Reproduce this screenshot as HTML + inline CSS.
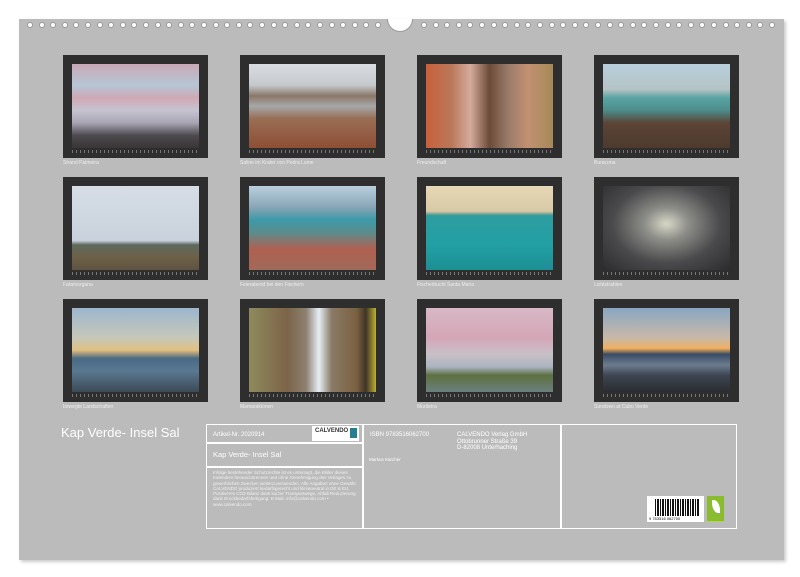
<!DOCTYPE html>
<html><head><meta charset="utf-8"><style>
*{margin:0;padding:0;box-sizing:border-box}
body{width:800px;height:577px;background:#fff;position:relative;overflow:hidden;font-family:"Liberation Sans",sans-serif}
#panel{position:absolute;left:19px;top:19px;width:765px;height:541px;background:#bbbbbb;box-shadow:2px 2px 3px #ccc}
.hole{position:absolute;top:22px;width:6px;height:6px;border-radius:50%;background:#fff;border:1px solid #999}
#notch{position:absolute;left:387px;top:19px;width:26px;height:13px;border-radius:0 0 13px 13px;background:#fff;border:1px solid #999;border-top:none}
.fr{position:absolute;width:145px;height:103px;background:#2e2e2e}
.ph{position:absolute;left:9px;top:9px;width:127px;height:84px}
.bar{position:absolute;left:9px;top:95px;width:127px;height:3px;background:repeating-linear-gradient(90deg,#777 0 1px,#2e2e2e 1px 4px)}
.cap{position:absolute;font-size:5px;color:#eee}
.w{color:#fff}
.box{position:absolute;border:1.5px solid #fff}
</style></head><body>
<div id="panel"></div>
<div id="notch"></div>
<div id="holes"></div>

<div class="fr" style="left:63px;top:55px"><div class="ph" style="background:linear-gradient(180deg,#c9a9b7 0%,#b6c6d6 25%,#cfa8b4 40%,#c7c4d2 55%,#a9a4b4 70%,#4d4a4e 85%,#3a3536 100%)"></div><div class="bar"></div></div>
<div class="fr" style="left:240px;top:55px"><div class="ph" style="background:linear-gradient(180deg,#d9dde2 0%,#c6c9cc 25%,#8a7768 38%,#a6a8aa 50%,#9a6e54 65%,#8e4e36 100%)"></div><div class="bar"></div></div>
<div class="fr" style="left:417px;top:55px"><div class="ph" style="background:linear-gradient(90deg,#c8603a 0%,#b9785a 20%,#d6aa9c 35%,#6c4a38 50%,#9b7c6a 65%,#c29072 80%,#a68958 100%)"></div><div class="bar"></div></div>
<div class="fr" style="left:594px;top:55px"><div class="ph" style="background:linear-gradient(180deg,#b8cfde 0%,#b5c4c4 30%,#5aa5a5 40%,#4e8c8a 55%,#5c4436 70%,#4d3a2e 100%)"></div><div class="bar"></div></div>
<div class="cap" style="left:63px;top:160px">Strand Palmeira</div>
<div class="cap" style="left:240px;top:160px">Saline im Krater von Pedra Lume</div>
<div class="cap" style="left:417px;top:160px">Freundschaft</div>
<div class="cap" style="left:594px;top:160px">Buracona</div>

<div class="fr" style="left:63px;top:177px"><div class="ph" style="background:linear-gradient(180deg,#d6dde6 0%,#c9d2dc 65%,#5e6a5c 70%,#6e6048 85%,#5e5444 100%)"></div><div class="bar"></div></div>
<div class="fr" style="left:240px;top:177px"><div class="ph" style="background:linear-gradient(180deg,#b8d0e0 0%,#8aa6b6 25%,#3d9aa8 40%,#5c8c8c 55%,#b06050 75%,#a06a5a 100%)"></div><div class="bar"></div></div>
<div class="fr" style="left:417px;top:177px"><div class="ph" style="background:linear-gradient(180deg,#e8d8b6 0%,#d8caa6 30%,#2e9da0 35%,#22a0a4 70%,#1d8f94 100%)"></div><div class="bar"></div></div>
<div class="fr" style="left:594px;top:177px"><div class="ph" style="background:radial-gradient(ellipse at 50% 45%,#d8d8c8 0%,#8c8c88 25%,#4a4a4c 60%,#2c2c2e 100%)"></div><div class="bar"></div></div>
<div class="cap" style="left:63px;top:282px">Fatamorgana</div>
<div class="cap" style="left:240px;top:282px">Feierabend bei den Fischern</div>
<div class="cap" style="left:417px;top:282px">Fischerbucht Santa Maria</div>
<div class="cap" style="left:594px;top:282px">Lichtstrahlen</div>

<div class="fr" style="left:63px;top:299px"><div class="ph" style="background:linear-gradient(180deg,#9cb6ce 0%,#c6c8b8 35%,#e2c082 50%,#486a86 60%,#5a7890 75%,#3c4a56 100%)"></div><div class="bar"></div></div>
<div class="fr" style="left:240px;top:299px"><div class="ph" style="background:linear-gradient(90deg,#8e8a5c 0%,#7c6448 30%,#8e8070 45%,#e6eef6 55%,#8a7a66 65%,#7a6040 85%,#3e3428 92%,#bcb030 100%)"></div><div class="bar"></div></div>
<div class="fr" style="left:417px;top:299px"><div class="ph" style="background:linear-gradient(180deg,#d8b8c6 0%,#d4a6b6 35%,#c8c0c8 55%,#aab4c0 70%,#5e7040 80%,#6a8080 100%)"></div><div class="bar"></div></div>
<div class="fr" style="left:594px;top:299px"><div class="ph" style="background:linear-gradient(180deg,#8aa6c2 0%,#c8b8a8 35%,#f0b060 48%,#384c66 55%,#6c7c8e 68%,#3e4652 80%,#2a2c30 100%)"></div><div class="bar"></div></div>
<div class="cap" style="left:63px;top:404px">bewegte Landschaften</div>
<div class="cap" style="left:240px;top:404px">Mamarakionen</div>
<div class="cap" style="left:417px;top:404px">Murdeira</div>
<div class="cap" style="left:594px;top:404px">Sundown at Cabo Verde</div>

<div class="w" style="position:absolute;left:61px;top:425px;font-size:13px">Kap Verde- Insel Sal</div>

<div class="box" style="left:206px;top:424px;width:531px;height:105px"></div>
<div style="position:absolute;left:362px;top:424px;width:1.5px;height:105px;background:#fff"></div>
<div style="position:absolute;left:560px;top:424px;width:1.5px;height:105px;background:#fff"></div>
<div style="position:absolute;left:206px;top:442px;width:157px;height:1.5px;background:#fff"></div>
<div style="position:absolute;left:206px;top:466px;width:157px;height:1.5px;background:#fff"></div>
<div class="w" style="position:absolute;left:213px;top:432px;font-size:6px">Artikel-Nr. 2020914</div>
<div style="position:absolute;left:312px;top:426px;width:47px;height:15px;background:#fff;font-size:6px;color:#333;padding:2px 3px;font-weight:bold">CALVENDO<span style="position:absolute;right:2px;top:2px;width:7px;height:10px;background:#2a7c90"></span></div>
<div class="w" style="position:absolute;left:213px;top:450px;font-size:7.5px">Kap Verde- Insel Sal</div>
<div class="w" style="position:absolute;left:213px;top:470px;width:148px;font-size:4.5px;line-height:5.3px;color:#f0f0f0">Infolge bestehender Schutzrechte ist es untersagt, die Bilder dieses Kalenders herauszutrennen und ohne Genehmigung des Verlages zu gewerblichen Zwecken weiterzuverwenden. Alle Angaben ohne Gewähr. CALVENDO produziert bedarfsgerecht und klimaneutral in DE &amp; EU. Positiveres CO2-Bilanz dank kurzer Transportwege, Abfall-Reduzierung dank Druckbedarfsfertigung. E-Mail: info@calvendo.com • www.calvendo.com</div>
<div class="w" style="position:absolute;left:370px;top:432px;font-size:6px">ISBN 9783516062700</div>
<div class="w" style="position:absolute;left:369px;top:457px;font-size:4.5px">Markus Kärcher</div>
<div class="w" style="position:absolute;left:457px;top:432px;font-size:6px;line-height:6.5px">CALVENDO Verlag GmbH<br>Ottobrunner Straße 39<br>D-82008 Unterhaching</div>
<div style="position:absolute;left:647px;top:496px;width:57px;height:26px;background:#fff"><div style="position:absolute;left:8px;top:3px;width:44px;height:17px;background:repeating-linear-gradient(90deg,#111 0 1px,#fff 1px 2px,#111 2px 4px,#fff 4px 5px)"></div><div style="position:absolute;left:2px;top:20px;font-size:4px;color:#111">9 783516 062700</div></div>
<div style="position:absolute;left:707px;top:496px;width:17px;height:25px;background:#8bbb2e"><div style="position:absolute;left:5px;top:4px;width:8px;height:13px;background:#fff;border-radius:0 80% 0 80%"></div></div>

<script>
var h=document.getElementById('holes'),s='';
for(var i=0;i<31;i++){s+='<div class="hole" style="left:'+(27+i*11.6)+'px"></div>';s+='<div class="hole" style="left:'+(421+i*11.6)+'px"></div>';}
h.innerHTML=s;
</script>
</body></html>
